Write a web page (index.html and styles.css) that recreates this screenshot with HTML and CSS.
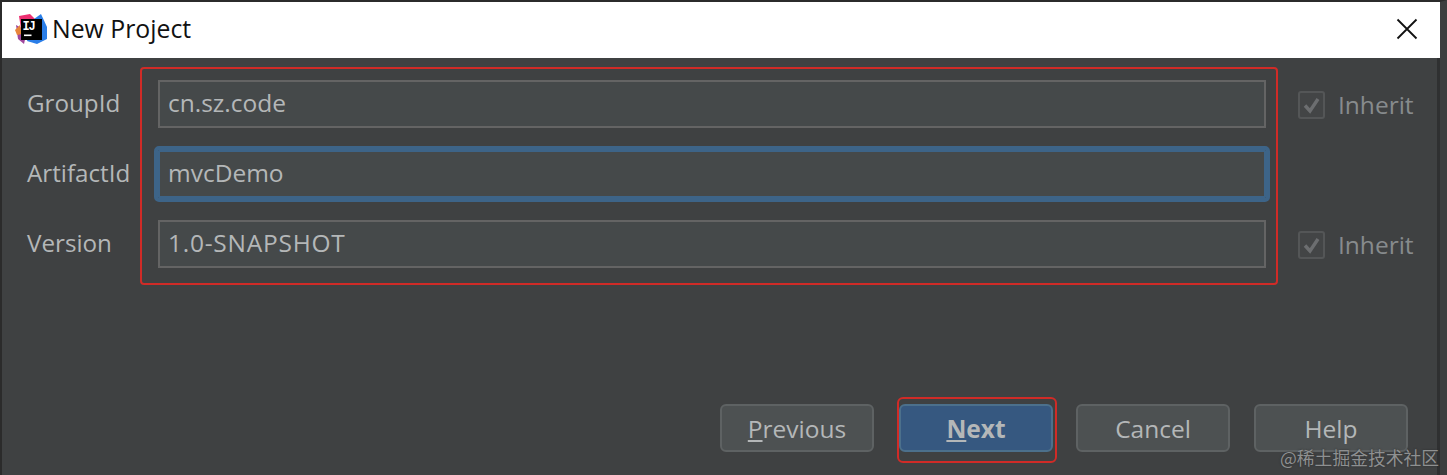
FILE: index.html
```html
<!DOCTYPE html>
<html lang="en">
  <head>
    <meta charset="UTF-8" />
    <meta name="viewport" content="width=device-width, initial-scale=1.0" />
    <title>New Project</title>
    <link rel="stylesheet" href="styles.css">
  </head>
  <body>
    <div class="dialog">
      <div class="title-bar">
        <svg class="app-icon" width="32" height="32" viewBox="0 0 32 32">
          <polygon points="1,12 3,26 9,31 12,18" fill="#a0479c"/>
          <polygon points="0,17 5,12 7,21 2,22" fill="#e8853a"/>
          <polygon points="4,3 15,1 22,8 6,16" fill="#ec2f71"/>
          <polygon points="19,6 26,1 32,14 32,26 22,31 12,28" fill="#2a7ee8"/>
          <rect x="6" y="6" width="21" height="21" fill="#000"/>
          <text class="app-icon-text" x="7.5" y="17">IJ</text>
          <rect x="9" y="21.5" width="7.5" height="1.6" fill="#fff"/>
        </svg>
        <span class="title-text">New Project</span>
        <svg class="close-icon" width="22" height="22" viewBox="0 0 22 22">
          <path d="M1.5 1.5 L20.5 20.5 M20.5 1.5 L1.5 20.5" stroke="#111" stroke-width="1.8" fill="none"/>
        </svg>
      </div>
      <div class="content">
        <form class="form-grid">
          <label class="field-label">GroupId</label>
          <div class="field">cn.sz.code</div>
          <div class="inherit">
            <span class="check">
              <svg width="20" height="20" viewBox="0 0 20 20"><path d="M3 10.5 L8 16 L16 4" stroke="#6c6e70" stroke-width="3.4" fill="none"/></svg>
            </span>
            <span>Inherit</span>
          </div>
          <label class="field-label">ArtifactId</label>
          <div class="field field-focus">mvcDemo</div>
          <div></div>
          <label class="field-label">Version</label>
          <div class="field field-caps">1.0-SNAPSHOT</div>
          <div class="inherit">
            <span class="check">
              <svg width="20" height="20" viewBox="0 0 20 20"><path d="M3 10.5 L8 16 L16 4" stroke="#6c6e70" stroke-width="3.4" fill="none"/></svg>
            </span>
            <span>Inherit</span>
          </div>
        </form>
        <div class="button-row">
          <button class="btn"><u>P</u>revious</button>
          <button class="btn btn-primary"><u>N</u>ext</button>
          <button class="btn">Cancel</button>
          <button class="btn">Help</button>
        </div>
      </div>
      <div class="mark mark-form"></div>
      <div class="mark mark-next"></div>
      <div class="watermark">@稀土掘金技术社区</div>
    </div>
  </body>
</html>
```

FILE: styles.css
```css
html,
body {
  margin: 0;
  height: 100%;
  overflow: hidden;
}
body {
  background-color: #3f4142;
  font-family: "Open Sans", "Noto Sans", sans-serif;
}
.dialog {
  position: relative;
  height: 475px;
  box-sizing: border-box;
  display: flex;
  flex-direction: column;
  border-top: 2px solid #2b2b2b;
  border-left: 2px solid #2b2b2b;
  border-right: 7px solid #3c3e3f;
  box-shadow: inset -3px 0 0 #2f3031;
}
.title-bar {
  height: 56px;
  flex: none;
  box-sizing: border-box;
  display: flex;
  align-items: center;
  background-color: #ffffff;
  padding: 0 22px 2px 13px;
}
.app-icon {
  flex: none;
}
.app-icon-text {
  font-family: "Liberation Mono", monospace;
  font-size: 12px;
  font-weight: bold;
  letter-spacing: -1.2px;
  fill: #ffffff;
}
.title-text {
  margin-left: 5px;
  margin-top: -2px;
  font-size: 24.8px;
  color: #111111;
}
.close-icon {
  margin-left: auto;
}
.content {
  flex: 1;
  display: flex;
  flex-direction: column;
  padding: 22px 32px 23px 25px;
  color: #b4b7b8;
  font-size: 24.5px;
}
.form-grid {
  display: grid;
  grid-template-columns: 131px 1108px 1fr;
  grid-auto-rows: 48px;
  row-gap: 22px;
  align-items: center;
}
.field-label {
  line-height: 44px;
  margin-bottom: 2px;
  font-size: 24.2px;
}
.field {
  height: 48px;
  box-sizing: border-box;
  line-height: 42px;
  padding-left: 8px;
  background-color: #45494a;
  border: 2px solid #646464;
}
.field-focus {
  border-color: #3d6488;
  outline: 4px solid #3d6488;
  border-radius: 1px;
}
.field-caps {
  letter-spacing: 0.75px;
}
.inherit {
  display: flex;
  align-items: center;
  margin-left: 32px;
  color: #878b8d;
  white-space: nowrap;
}
.check {
  width: 23px;
  height: 24px;
  margin-right: 13px;
  margin-top: 2px;
  display: flex;
  align-items: center;
  justify-content: center;
  border: 2px solid #545657;
  border-radius: 3px;
  background-color: #434546;
}
.button-row {
  margin-top: auto;
  display: flex;
  justify-content: flex-end;
  gap: 24px;
}
.btn {
  width: 154px;
  height: 48px;
  padding: 0;
  font-family: inherit;
  font-size: 24.5px;
  color: #b4b7b8;
  background-color: #4d5152;
  border: 2px solid #5e6263;
  border-radius: 6px;
}
.btn-primary {
  background-color: #365880;
  border-color: #4c708c;
  font-weight: bold;
  margin: 0 -1px 0 1px;
}
.mark {
  position: absolute;
  border: 2px solid #d02b27;
  border-radius: 4px;
}
.mark-form {
  left: 138px;
  top: 65px;
  width: 1134px;
  height: 214px;
}
.mark-next {
  left: 895px;
  top: 395px;
  width: 156px;
  height: 62px;
  border-radius: 6px;
}
.watermark {
  position: absolute;
  left: 1278px;
  top: 444px;
  font-family: "Noto Sans CJK SC", sans-serif;
  font-size: 17.8px;
  line-height: 22px;
  color: #8e9091;
  text-shadow: 0 0 2px #2c2c2c;
  white-space: nowrap;
}
```
